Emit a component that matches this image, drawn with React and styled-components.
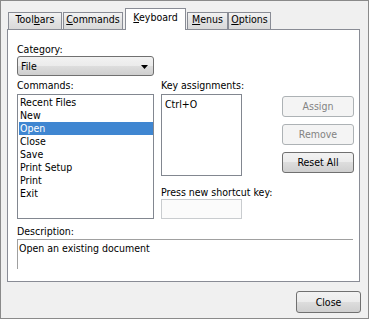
import React from 'react'
import styled, { createGlobalStyle } from 'styled-components'

const GlobalStyle = createGlobalStyle`
  html, body {
    margin: 0;
    padding: 0;
    background: #f0f0f0;
  }
  * {
    box-sizing: border-box;
  }
`

const Window = styled.div`
  width: 369px;
  height: 319px;
  border: 1px solid #8a8a8a;
  background: #f0f0f0;
  padding: 7px 8px 0 6px;
  font-family: 'DejaVu Sans Condensed', 'Liberation Sans', sans-serif;
  font-size: 10.5px;
  line-height: 13px;
  color: #000;
  display: flex;
  flex-direction: column;
`

const TabStrip = styled.div`
  display: flex;
  align-items: flex-end;
  height: 21px;
  padding-left: 1px;
`

const Tab = styled.div`
  position: relative;
  width: ${(p) => p.$w}px;
  margin-right: ${(p) => p.$mr ?? 1}px;
  border: 1px solid #898c95;
  border-bottom: none;
  text-align: center;
  ${(p) =>
    p.$active
      ? `
    height: 22px;
    margin-bottom: -1px;
    padding-top: 2px;
    background: #fff;
    z-index: 1;
  `
      : `
    height: 17px;
    padding-top: 0;
    background: linear-gradient(#f3f3f3, #e3e3e3 50%, #d9d9d9);
  `}
`

const Panel = styled.div`
  width: 353px;
  height: 253px;
  border: 1px solid #898c95;
  background: #fff;
  padding: 13px 5px 12px 9px;
  display: flex;
  flex-direction: column;
`

const Label = styled.div`
  height: 13px;
  white-space: nowrap;
  margin-bottom: ${(p) => p.$mb ?? 2}px;
  margin-top: ${(p) => p.$mt ?? 0}px;
`

const Select = styled.div`
  position: relative;
  width: 137px;
  height: 20px;
  border: 1px solid #707070;
  border-radius: 3px;
  background: linear-gradient(#f2f2f2, #ebebeb 50%, #dddddd 50%, #cfcfcf);
  padding: 3px 0 0 3px;
  margin-top: -1px;
`

const Arrow = styled.svg`
  position: absolute;
  right: 5px;
  top: 8px;
`

const Main = styled.div`
  display: grid;
  grid-template-columns: 137px 81px 1fr;
  column-gap: 7px;
  margin-top: 3px;
`

const Column = styled.div`
  display: flex;
  flex-direction: column;
`

const ListBox = styled.div`
  width: ${(p) => p.$w}px;
  height: ${(p) => p.$h}px;
  border: 1px solid #828790;
  background: #fff;
  padding: ${(p) => p.$pad};
`

const Row = styled.div`
  height: 13px;
  padding-left: 1px;
  background: ${(p) => (p.$selected ? '#3f86d1' : 'transparent')};
  color: ${(p) => (p.$selected ? '#fff' : '#000')};
`

const ShortcutInput = styled.div`
  width: 81px;
  height: 20px;
  border: 1px solid #c9cccf;
  background: #fbfbfb;
`

const Buttons = styled.div`
  display: flex;
  flex-direction: column;
  align-items: flex-end;
  gap: 7px;
  padding-top: 17px;
`

const Button = styled.div`
  width: ${(p) => p.$w}px;
  height: ${(p) => p.$h}px;
  border: 1px solid ${(p) => (p.$disabled ? '#adb2b5' : '#707070')};
  border-radius: 3px;
  background: ${(p) =>
    p.$disabled
      ? '#f4f4f4'
      : 'linear-gradient(#f2f2f2, #ebebeb 50%, #dddddd 50%, #cfcfcf)'};
  color: ${(p) => (p.$disabled ? '#838383' : '#000')};
  display: flex;
  align-items: center;
  justify-content: center;
`

const Description = styled.div`
  grid-column: 1 / -1;
  margin-top: 6px;
`

const DescBox = styled.div`
  width: 336px;
  height: 30px;
  border-top: 1px solid #a0a0a0;
  border-left: 1px solid #a0a0a0;
  padding: 2px 0 0 1px;
`

const Footer = styled.div`
  display: flex;
  justify-content: flex-end;
  margin-top: 9px;
  margin-right: -1px;
`

const tabs = [
  { key: 'b', pre: 'Tool', post: 'ars', w: 54, mr: 1 },
  { key: 'C', pre: '', post: 'ommands', w: 60, mr: 2 },
  { key: 'K', pre: '', post: 'eyboard', w: 61, mr: 1, active: true },
  { key: 'M', pre: '', post: 'enus', w: 41, mr: 0 },
  { key: 'O', pre: '', post: 'ptions', w: 43, mr: 0 },
]

const commands = ['Recent Files', 'New', 'Open', 'Close', 'Save', 'Print Setup', 'Print', 'Exit']

export default function App() {
  return (
    <>
      <GlobalStyle />
      <Window>
        <TabStrip>
          {tabs.map((t) => (
            <Tab key={t.key} $w={t.w} $mr={t.mr} $active={t.active}>
              {t.pre}
              <u>{t.key}</u>
              {t.post}
            </Tab>
          ))}
        </TabStrip>
        <Panel>
          <Label $mb={1}>Category:</Label>
          <Select>
            File
            <Arrow width="7" height="4" viewBox="0 0 7 4">
              <path d="M0 0h7L3.5 4z" fill="#000" />
            </Arrow>
          </Select>
          <Main>
            <Column>
              <Label>Commands:</Label>
              <ListBox $w={137} $h={125} $pad="1px 0 0 1px">
                {commands.map((c) => (
                  <Row key={c} $selected={c === 'Open'}>
                    {c}
                  </Row>
                ))}
              </ListBox>
            </Column>
            <Column>
              <Label>Key assignments:</Label>
              <ListBox $w={81} $h={82} $pad="3px 0 0 3px">
                Ctrl+O
              </ListBox>
              <Label $mt={10} $mb={0}>Press new shortcut key:</Label>
              <ShortcutInput />
            </Column>
            <Buttons>
              <Button $w={72} $h={21} $disabled>Assign</Button>
              <Button $w={72} $h={21} $disabled>Remove</Button>
              <Button $w={72} $h={21}>Reset All</Button>
            </Buttons>
            <Description>
              <Label $mb={1}>Description:</Label>
              <DescBox>Open an existing document</DescBox>
            </Description>
          </Main>
        </Panel>
        <Footer>
          <Button $w={65} $h={22}>Close</Button>
        </Footer>
      </Window>
    </>
  )
}
